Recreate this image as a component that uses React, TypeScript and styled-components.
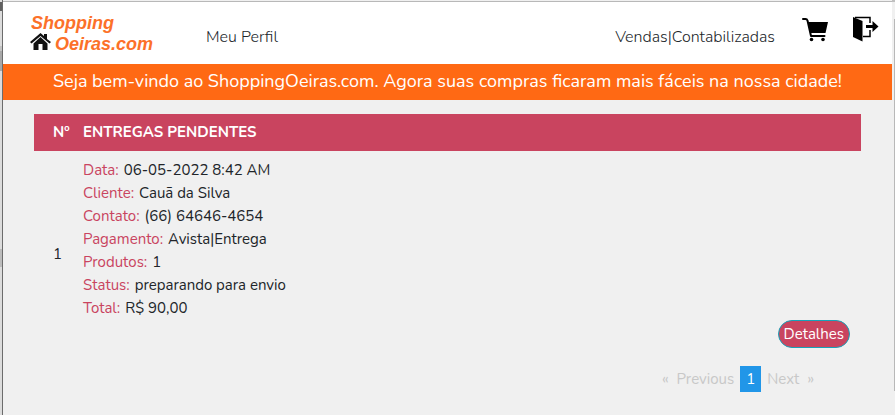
import React from "react";
import styled, { createGlobalStyle } from "styled-components";

const GlobalStyle = createGlobalStyle`
  *, *::before, *::after { box-sizing: border-box; }
  body {
    margin: 0;
    background: #f0f0f0;
    color: #212529;
    font-family: Nunito, Lato, sans-serif;
    font-size: 15px;
    line-height: 23px;
  }
  a { color: inherit; text-decoration: none; }
`;

const Frame = styled.div`
  display: grid;
  grid-template-columns: 3px 1fr 3px;
  min-height: 100vh;
  overflow: hidden;
`;

const Backdrop = styled.div`
  display: flex;
  flex-direction: column;
  background: #dcdcdc;
  border-right: 1px solid #6c6c6c;
`;

const BackdropBand = styled.div<{ $top: number; $height: number; $color: string }>`
  margin-top: ${(p) => p.$top}px;
  height: ${(p) => p.$height}px;
  background: ${(p) => p.$color};
`;

const ScrollTrack = styled.div`
  padding: 17px 0 24px;
  display: flex;
  justify-content: flex-end;
  border-top: 2px solid #c0c0c0;
`;

const ScrollThumb = styled.div`
  width: 1px;
  background: #b8b8b8;
`;

const Page = styled.div`
  min-width: 0;
  padding-top: 1px;
`;

const Header = styled.header`
  display: flex;
  align-items: center;
  height: 63px;
  padding: 0 12px 0 27px;
  border-top: 1px solid #b8b8b8;
  background: #fff;
  font-size: 16px;
`;

const Logo = styled.a`
  display: block;
  width: 128px;
  height: 40px;
  margin-right: 48px;
`;

const LogoText = styled.text`
  font: italic bold 18px "Liberation Sans", Arial, sans-serif;
  fill: #fc7129;
`;

const NavLink = styled.a`
  padding-top: 9px;
  font-weight: 300;
`;

const HeaderEnd = styled.div`
  display: flex;
  align-items: center;
  margin-left: auto;
`;

const IconLink = styled.a<{ $gap: number }>`
  display: block;
  width: 27px;
  height: 28px;
  margin: 0 0 9px ${(p) => p.$gap}px;
`;

const Banner = styled.p`
  margin: 0;
  padding: 0 16px 1px;
  background: #ff6914;
  color: #fff;
  font-size: 18px;
  line-height: 35px;
  text-align: center;
  white-space: nowrap;
`;

const Content = styled.main`
  padding: 14px 31px 0;
`;

const Table = styled.table`
  width: 100%;
  border-collapse: collapse;
  text-align: left;
`;

const HeadRow = styled.tr`
  background: #c9445f;
  color: #fff;
`;

const HeadCell = styled.th<{ $width?: number }>`
  width: ${(p) => (p.$width ? `${p.$width}px` : "auto")};
  padding: 7px 0 7px ${(p) => (p.$width ? 19 : 0)}px;
  font-weight: 700;
`;

const NumberCell = styled.td`
  padding: 0 0 0 19px;
  vertical-align: middle;
`;

const DetailCell = styled.td`
  padding: 8px 11px 9px 0;
`;

const Details = styled.dl`
  margin: 0;
`;

const Detail = styled.div`
  display: flex;
  gap: 5px;
`;

const Term = styled.dt`
  color: #c9445f;
`;

const Value = styled.dd`
  margin: 0;
`;

const DetailsButton = styled.button`
  display: block;
  height: 28px;
  margin: 0 0 0 auto;
  padding: 0 5px;
  border: 1px solid #17a2b8;
  border-radius: 14px;
  background: #c9445f;
  color: #fff;
  font: inherit;
`;

const Pager = styled.nav`
  display: flex;
  justify-content: flex-end;
  gap: 6px;
  margin-right: 45px;
  padding-top: 9px;
  color: #c8c8c8;
  line-height: 26px;
`;

const PagerLink = styled.a<{ $kind?: "active" | "edge" }>`
  padding: 0 ${(p) => (p.$kind === "active" ? 6 : 0)}px;
  margin: 0 ${(p) => (p.$kind === "edge" ? 2 : 0)}px;
  background: ${(p) => (p.$kind === "active" ? "#2196e8" : "transparent")};
  color: ${(p) => (p.$kind === "active" ? "#fff" : "inherit")};
`;

const order: [string, string][] = [
  ["Data:", "06-05-2022 8:42 AM"],
  ["Cliente:", "Cauã da Silva"],
  ["Contato:", "(66) 64646-4654"],
  ["Pagamento:", "Avista|Entrega"],
  ["Produtos:", "1"],
  ["Status:", "preparando para envio"],
  ["Total:", "R$ 90,00"],
];

function BrandLogo() {
  return (
    <svg width="128" height="40" viewBox="0 0 128 40" role="img" aria-label="Shopping Oeiras.com">
      <LogoText x="1" y="16">Shopping</LogoText>
      <LogoText x="25" y="37">Oeiras.com</LogoText>
      <path d="M0 29 10.500 20 14 23V21h3v5l4 3-1.500 1.500L10.500 23 1.500 30.500Z" fill="#111" />
      <path d="M3.500 30.500 10.500 24l7 6.500V37H12.500V31h-4v6h-5Z" fill="#111" />
    </svg>
  );
}

function CartIcon() {
  return (
    <svg width="27" height="28" viewBox="0 0 27 28" aria-hidden="true">
      <path d="M1 4H3.500Q5 4 5.500 5.500L9 21H22.500" fill="none" stroke="#000" strokeWidth="2" strokeLinecap="round" strokeLinejoin="round" />
      <path d="M6 7H26L23.500 18H8.500Z" fill="#000" />
      <circle cx="9.500" cy="24.500" r="1.800" />
      <circle cx="21" cy="24.500" r="1.800" />
    </svg>
  );
}

function ExitIcon() {
  return (
    <svg width="27" height="28" viewBox="0 0 27 28" aria-hidden="true">
      <path d="M2 2.500H17V8M17 15V21.500H10" fill="none" stroke="#000" strokeWidth="1.500" />
      <path d="M0 2 9.500 6V26.500L0 22Z" />
      <path d="M13 10H19.500V6L25.500 11.500 19.500 17V13H13Z" />
    </svg>
  );
}

export default function App() {
  return (
    <>
      <GlobalStyle />
      <Frame>
        <Backdrop>
          <BackdropBand $top={2} $height={9} $color="#606060" />
          <BackdropBand $top={35} $height={5} $color="#c4c4c4" />
          <BackdropBand $top={0} $height={20} $color="#a8a8a8" />
          <BackdropBand $top={178} $height={18} $color="#bcbcbc" />
        </Backdrop>
        <Page>
          <Header>
            <Logo href="#"><BrandLogo /></Logo>
            <NavLink href="#perfil">Meu Perfil</NavLink>
            <HeaderEnd>
              <NavLink href="#vendas">Vendas|Contabilizadas</NavLink>
              <IconLink $gap={27} href="#carrinho" aria-label="Carrinho"><CartIcon /></IconLink>
              <IconLink $gap={24} href="#sair" aria-label="Sair"><ExitIcon /></IconLink>
            </HeaderEnd>
          </Header>
          <Banner>
            Seja bem-vindo ao ShoppingOeiras.com. Agora suas compras ficaram mais fáceis na nossa cidade!
          </Banner>
          <Content>
            <Table>
              <thead>
                <HeadRow>
                  <HeadCell scope="col" $width={49}>Nº</HeadCell>
                  <HeadCell scope="col">ENTREGAS PENDENTES</HeadCell>
                </HeadRow>
              </thead>
              <tbody>
                <tr>
                  <NumberCell>1</NumberCell>
                  <DetailCell>
                    <Details>
                      {order.map(([term, value]) => (
                        <Detail key={term}>
                          <Term>{term}</Term>
                          <Value>{value}</Value>
                        </Detail>
                      ))}
                    </Details>
                    <DetailsButton type="button">Detalhes</DetailsButton>
                  </DetailCell>
                </tr>
              </tbody>
            </Table>
            <Pager aria-label="Paginação">
              <PagerLink href="#first" $kind="edge">«</PagerLink>
              <PagerLink href="#previous">Previous</PagerLink>
              <PagerLink href="#1" $kind="active" aria-current="page">1</PagerLink>
              <PagerLink href="#next">Next</PagerLink>
              <PagerLink href="#last" $kind="edge">»</PagerLink>
            </Pager>
          </Content>
        </Page>
        <ScrollTrack><ScrollThumb /></ScrollTrack>
      </Frame>
    </>
  );
}
